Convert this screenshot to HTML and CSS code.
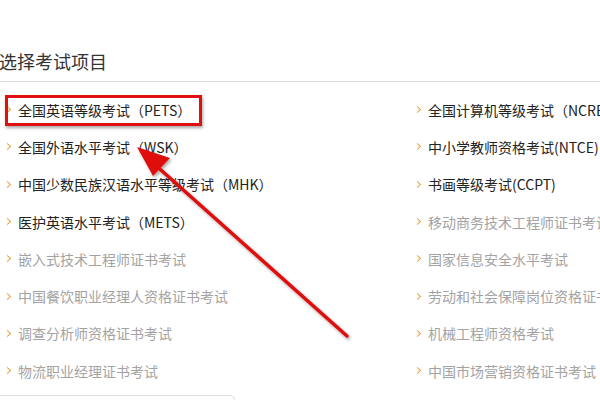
FILE: index.html
```html
<!DOCTYPE html>
<html lang="zh-CN">
<head>
<meta charset="utf-8">
<link rel="stylesheet" href="styles.css">
</head>
<body>
<div class="page">
  <div class="title">选择考试项目</div>
  <ul class="list">
    <li class="item dark"><span class="chev"></span>全国英语等级考试（PETS）</li>
    <li class="item dark"><span class="chev"></span>全国计算机等级考试（NCRE）</li>
    <li class="item dark"><span class="chev"></span>全国外语水平考试（WSK）</li>
    <li class="item dark"><span class="chev"></span>中小学教师资格考试(NTCE)</li>
    <li class="item dark"><span class="chev"></span>中国少数民族汉语水平等级考试（MHK）</li>
    <li class="item dark"><span class="chev"></span>书画等级考试(CCPT)</li>
    <li class="item dark"><span class="chev"></span>医护英语水平考试（METS）</li>
    <li class="item"><span class="chev"></span>移动商务技术工程师证书考试</li>
    <li class="item"><span class="chev"></span>嵌入式技术工程师证书考试</li>
    <li class="item"><span class="chev"></span>国家信息安全水平考试</li>
    <li class="item"><span class="chev"></span>中国餐饮职业经理人资格证书考试</li>
    <li class="item"><span class="chev"></span>劳动和社会保障岗位资格证书考试</li>
    <li class="item"><span class="chev"></span>调查分析师资格证书考试</li>
    <li class="item"><span class="chev"></span>机械工程师资格考试</li>
    <li class="item"><span class="chev"></span>物流职业经理证书考试</li>
    <li class="item"><span class="chev"></span>中国市场营销资格证书考试</li>
  </ul>
  <div class="bottom-box"></div>
  <div class="highlight"></div>
  <svg class="arrow" width="600" height="400" viewBox="0 0 600 400">
    <defs>
      <filter id="sh" x="-20%" y="-20%" width="140%" height="140%">
        <feDropShadow dx="1.5" dy="2" stdDeviation="1.5" flood-color="#000" flood-opacity="0.35"/>
      </filter>
    </defs>
    <g filter="url(#sh)">
      <line x1="347" y1="336" x2="152" y2="162" stroke="#e01010" stroke-width="3.5" stroke-linecap="round"/>
      <polygon points="137,147 170,158 153,176" fill="#e01010"/>
    </g>
  </svg>
</div>
</body>
</html>
```
FILE: styles.css
```css
html, body {
  margin: 0;
  padding: 0;
  background: #fff;
}
.page {
  position: relative;
  width: 600px;
  height: 400px;
  overflow: hidden;
  font-family: "Noto Sans CJK SC", "Noto Sans", sans-serif;
}
.title {
  margin: 0;
  padding: 49px 0 8px 0;
  font-size: 18px;
  line-height: 24px;
  color: #333;
  border-bottom: 1px solid #ddd;
  text-indent: -1px;
}
.list {
  list-style: none;
  margin: 0;
  padding: 9px 0 0 0;
  display: grid;
  grid-template-columns: 410px 190px;
  grid-auto-rows: 37.3px;
}
.item {
  display: flex;
  align-items: center;
  white-space: nowrap;
  overflow: hidden;
  font-size: 14px;
  color: #a3a3a3;
  padding-left: 5px;
}
.item.dark {
  color: #222;
}
.chev {
  width: 4px;
  height: 4px;
  border-top: 1.2px solid #f0a040;
  border-right: 1.2px solid #f0a040;
  transform: rotate(45deg);
  margin-right: 8px;
  flex: none;
}
.bottom-box {
  margin-top: 6px;
  width: 234px;
  height: 20px;
  border: 1px solid #ddd;
  border-left: none;
  border-radius: 0 5px 0 0;
}
.highlight {
  position: absolute;
  left: 5px;
  top: 95px;
  width: 191px;
  height: 25px;
  border: 3px solid #e01010;
  box-shadow: 1px 2px 3px rgba(0,0,0,0.35);
}
.arrow {
  position: absolute;
  left: 0;
  top: 0;
}
```
